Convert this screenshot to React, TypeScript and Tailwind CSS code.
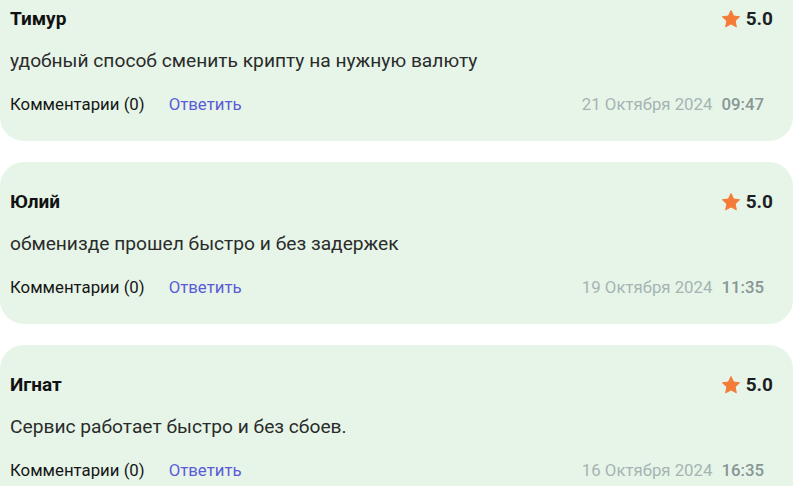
const reviews = [
  { name: 'Тимур', text: 'удобный способ сменить крипту на нужную валюту', date: '21 Октября 2024', time: '09:47' },
  { name: 'Юлий', text: 'обменизде прошел быстро и без задержек', date: '19 Октября 2024', time: '11:35' },
  { name: 'Игнат', text: 'Сервис работает быстро и без сбоев.', date: '16 Октября 2024', time: '16:35' },
];

function Star() {
  return (
    <svg viewBox="0 0 24 24" className="w-[20px] h-[20px]" fill="#f47b38">
      <path d="M12 1.8l3.1 6.6 7.2.9-5.3 5 1.4 7.1L12 17.9l-6.4 3.5 1.4-7.1-5.3-5 7.2-.9z" strokeLinejoin="round" stroke="#f47b38" strokeWidth={1.2} />
    </svg>
  );
}

export default function App() {
  return (
    <div
      className="w-[793px] h-[486px] overflow-hidden bg-white"
      style={{ fontFamily: 'Roboto, "Liberation Sans", sans-serif' }}
    >
      <div className="-mt-[21px] flex flex-col gap-[21px]">
        {reviews.map((r) => (
          <div key={r.name} className="h-[162px] bg-[#e6f5e8] rounded-[24px] pl-[10px] pt-[28px] pb-[24px] flex flex-col">
            <div className="flex items-center justify-between h-[24px] pr-[20px]">
              <span className="text-[19px] font-bold text-[#111]">{r.name}</span>
              <div className="flex items-center gap-[5px]">
                <Star />
                <span className="text-[19px] font-bold text-[#1c1f24]">5.0</span>
              </div>
            </div>
            <p className="mt-[18px] h-[24px] leading-[24px] text-[19.2px] text-[#2b2b2b]">{r.text}</p>
            <div className="mt-[20px] flex items-center justify-between h-[24px] pr-[29px]">
              <div className="flex items-center gap-[24px] text-[16.8px]">
                <span className="text-[#151515]">Комментарии (0)</span>
                <span className="text-[#5b5bd6]">Ответить</span>
              </div>
              <div className="flex items-center gap-[9px] text-[16.8px]">
                <span className="text-[#a7b3b3]">{r.date}</span>
                <span className="font-medium text-[#889696]">{r.time}</span>
              </div>
            </div>
          </div>
        ))}
      </div>
    </div>
  );
}
